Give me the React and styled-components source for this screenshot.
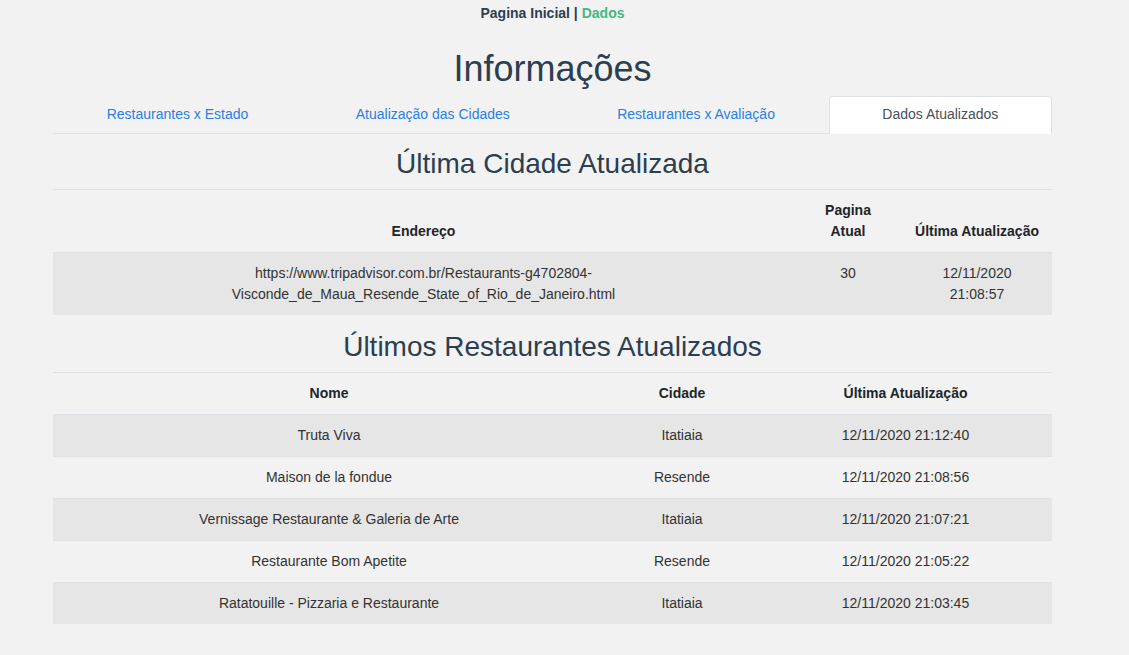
import styled, { createGlobalStyle } from "styled-components";

const GlobalStyle = createGlobalStyle`
  body {
    margin: 0;
    background-color: #f2f2f2;
    font-family: "Liberation Sans", Arial, sans-serif;
    color: #2c3e50;
  }
`;

const StyledPage = styled.div`
  width: 999px;
  margin-left: 53px;
  text-align: center;
`;

const StyledTopNav = styled.nav`
  padding: 4px 0 0;
  font-size: 14px;
  line-height: 18px;
  font-weight: bold;
  color: #2c3e50;
`;

const StyledNavLink = styled.a`
  color: ${(p) => (p.$active ? "#42b983" : "#2c3e50")};
  text-decoration: none;
`;

const StyledTitle = styled.h1`
  margin: 25px 0 6px;
  font-size: 36px;
  font-weight: 500;
  line-height: 43px;
  color: #2c3e50;
`;

const StyledTabs = styled.ul`
  display: flex;
  margin: 0;
  padding: 0;
  list-style: none;
  border-bottom: 1px solid #dee2e6;
`;

const StyledTab = styled.li`
  flex: 1 1 auto;
  margin-bottom: -1px;
  padding: 7px 16px 8px;
  font-size: 14px;
  line-height: 21px;
  color: ${(p) => (p.$active ? "#495057" : "#2a7fe0")};
  background-color: ${(p) => (p.$active ? "#fff" : "transparent")};
  border: 1px solid ${(p) => (p.$active ? "#dee2e6" : "transparent")};
  border-bottom-color: ${(p) => (p.$active ? "#fff" : "transparent")};
  border-radius: 4px 4px 0 0;
  white-space: nowrap;
`;

const StyledSectionTitle = styled.h3`
  margin: ${(p) => (p.$first ? "13px" : "0")} 0 8px;
  font-size: 28px;
  font-weight: 500;
  line-height: 34px;
  color: #2c3e50;
`;

const StyledTable = styled.table`
  width: 100%;
  margin-bottom: 15px;
  border-collapse: collapse;
  table-layout: fixed;
  font-size: 14px;
  line-height: 21px;
  color: #212529;
`;

const StyledHeadCell = styled.th`
  padding: 10px 12px;
  vertical-align: bottom;
  font-weight: bold;
  border-top: 1px solid #dee2e6;
`;

const StyledRow = styled.tr`
  background-color: ${(p) => (p.$striped ? "#e6e6e6" : "transparent")};
`;

const StyledCell = styled.td`
  padding: 10px 12px;
  vertical-align: top;
  border-top: 1px solid #dee2e6;
  color: #333;
`;

const tabs = [
  "Restaurantes x Estado",
  "Atualização das Cidades",
  "Restaurantes x Avaliação",
  "Dados Atualizados",
];

const restaurants = [
  ["Truta Viva", "Itatiaia", "12/11/2020 21:12:40"],
  ["Maison de la fondue", "Resende", "12/11/2020 21:08:56"],
  ["Vernissage Restaurante & Galeria de Arte", "Itatiaia", "12/11/2020 21:07:21"],
  ["Restaurante Bom Apetite", "Resende", "12/11/2020 21:05:22"],
  ["Ratatouille - Pizzaria e Restaurante", "Itatiaia", "12/11/2020 21:03:45"],
];

const App = () => {
  return (
    <>
      <GlobalStyle />
      <StyledPage>
        <StyledTopNav>
          <StyledNavLink href="#">Pagina Inicial</StyledNavLink> |{" "}
          <StyledNavLink href="#" $active>
            Dados
          </StyledNavLink>
        </StyledTopNav>

        <StyledTitle>Informações</StyledTitle>

        <StyledTabs>
          {tabs.map((tab, i) => (
            <StyledTab key={tab} $active={i === 3}>
              {tab}
            </StyledTab>
          ))}
        </StyledTabs>

        <StyledSectionTitle $first>Última Cidade Atualizada</StyledSectionTitle>
        <StyledTable>
          <colgroup>
            <col style={{ width: 741 }} />
            <col style={{ width: 108 }} />
            <col style={{ width: 150 }} />
          </colgroup>
          <thead>
            <tr>
              <StyledHeadCell>Endereço</StyledHeadCell>
              <StyledHeadCell>Pagina Atual</StyledHeadCell>
              <StyledHeadCell>Última Atualização</StyledHeadCell>
            </tr>
          </thead>
          <tbody>
            <StyledRow $striped>
              <StyledCell>
                https://www.tripadvisor.com.br/Restaurants-g4702804-Visconde_de_Maua_Resende_State_of_Rio_de_Janeiro.html
              </StyledCell>
              <StyledCell>30</StyledCell>
              <StyledCell>12/11/2020 21:08:57</StyledCell>
            </StyledRow>
          </tbody>
        </StyledTable>

        <StyledSectionTitle>Últimos Restaurantes Atualizados</StyledSectionTitle>
        <StyledTable>
          <colgroup>
            <col style={{ width: 552 }} />
            <col style={{ width: 154 }} />
            <col style={{ width: 293 }} />
          </colgroup>
          <thead>
            <tr>
              <StyledHeadCell>Nome</StyledHeadCell>
              <StyledHeadCell>Cidade</StyledHeadCell>
              <StyledHeadCell>Última Atualização</StyledHeadCell>
            </tr>
          </thead>
          <tbody>
            {restaurants.map(([name, city, date], i) => (
              <StyledRow key={name} $striped={i % 2 === 0}>
                <StyledCell>{name}</StyledCell>
                <StyledCell>{city}</StyledCell>
                <StyledCell>{date}</StyledCell>
              </StyledRow>
            ))}
          </tbody>
        </StyledTable>
      </StyledPage>
    </>
  );
};

export default App;
